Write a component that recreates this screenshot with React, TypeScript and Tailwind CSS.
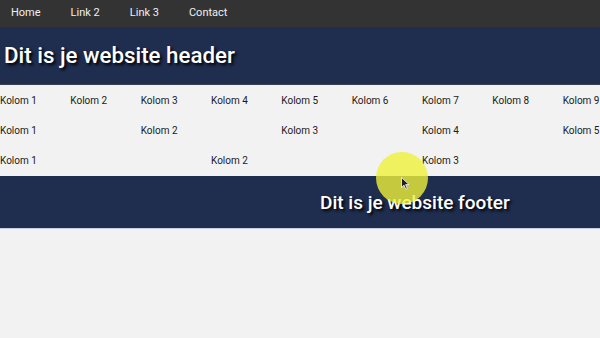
import React from "react";

const row1 = ["Kolom 1","Kolom 2","Kolom 3","Kolom 4","Kolom 5","Kolom 6","Kolom 7","Kolom 8","Kolom 9"];
const row2 = ["Kolom 1","Kolom 2","Kolom 3","Kolom 4","Kolom 5"];
const row3 = ["Kolom 1","Kolom 2","Kolom 3"];

export default function App() {
  return (
    <div className="relative w-[600px] h-[338px] overflow-hidden bg-[#f2f2f2]" style={{ fontFamily: "Roboto, 'Open Sans', sans-serif" }}>
      <nav className="h-[27px] bg-[#333333] flex items-center pl-[11px] gap-[30px] text-[11px] text-[#f0f0f0]">
        <span>Home</span>
        <span>Link 2</span>
        <span>Link 3</span>
        <span>Contact</span>
      </nav>
      <header className="h-[58px] bg-[#1f2d4f] flex items-center pl-[4px] border-b border-[#3a4150]">
        <h1 className="text-[22.3px] font-medium text-white [text-shadow:2px_2px_3px_#000]">Dit is je website header</h1>
      </header>
      <section className="h-[91px] bg-[#f2f2f2] text-[10px] text-[#1a1a1a] flex flex-col">
        <div className="h-[30px] flex items-center whitespace-nowrap">
          {row1.map((t, i) => <div key={i} className="w-[70.33px] shrink-0">{t}</div>)}
        </div>
        <div className="h-[30px] flex items-center whitespace-nowrap">
          {row2.map((t, i) => <div key={i} className="w-[140.67px] shrink-0">{t}</div>)}
        </div>
        <div className="h-[30px] flex items-center whitespace-nowrap">
          {row3.map((t, i) => <div key={i} className="w-[211px] shrink-0">{t}</div>)}
        </div>
      </section>
      <footer className="h-[53px] bg-[#1f2d4f] flex items-center pl-[320px] pt-[3px] border-b border-[#c8cde0]">
        <h2 className="text-[19px] font-medium text-white [text-shadow:2px_2px_3px_#000]">Dit is je website footer</h2>
      </footer>
      <div className="absolute left-[376px] top-[152px] w-[52px] h-[52px] rounded-full bg-[#eef03a] opacity-80" />
      <svg className="absolute left-[401px] top-[177px]" width="9" height="13" viewBox="0 0 9 13">
        <path d="M0.5 0.5 L0.5 10.5 L3 8.2 L4.8 12.3 L6.3 11.6 L4.6 7.6 L8 7.6 Z" fill="#222" stroke="#fff" strokeWidth="0.8" />
      </svg>
    </div>
  );
}
